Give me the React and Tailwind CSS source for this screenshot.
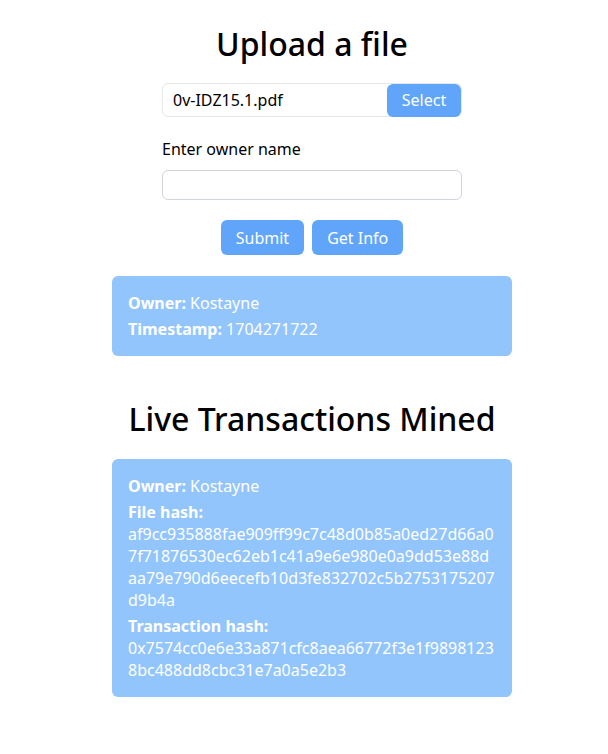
import React, { useState } from "react";

const fileHash =
  "af9cc935888fae909ff99c7c48d0b85a0ed27d66a07f71876530ec62eb1c41a9e6e980e0a9dd53e88daa79e790d6eecefb10d3fe832702c5b2753175207d9b4a";
const txHash = "0x7574cc0e6e33a871cfc8aea66772f3e1f98981238bc488dd8cbc31e7a0a5e2b3";

const App = () => {
  const [owner, setOwner] = useState("");

  return (
    <div className="min-h-screen bg-white pl-4 font-['Noto_Sans',sans-serif] text-base text-black">
      <div className="flex flex-col items-center">
        <h1 className="mt-[22px] text-[32px] leading-[44px] font-medium">Upload a file</h1>

        <div className="mt-[17px] flex h-[34px] w-[300px] items-center rounded-md border border-gray-200 bg-white">
          <span className="flex-1 pl-[10px] leading-[22px]">0v-IDZ15.1.pdf</span>
          <button className="h-[33px] w-[74px] rounded-md bg-[#60a5fa] text-white leading-[22px]">
            Select
          </button>
        </div>

        <div className="mt-[21px] w-[300px]">
          <label className="block leading-[22px]">Enter owner name</label>
          <input
            type="text"
            value={owner}
            onChange={(e) => setOwner(e.target.value)}
            className="mt-[10px] block h-[30px] w-full rounded-md border border-gray-300 px-2 outline-none"
          />
        </div>

        <div className="mt-[20px] flex gap-2">
          <button className="h-[35px] rounded-md bg-[#60a5fa] px-[15px] leading-[22px] text-white">Submit</button>
          <button className="h-[35px] rounded-md bg-[#60a5fa] px-[15px] leading-[22px] text-white">Get Info</button>
        </div>

        <div className="mt-[21px] w-[400px] space-y-1 rounded-md bg-[#93c5fd] p-4 leading-[22px] text-white">
          <p>
            <span className="font-bold">Owner:</span> Kostayne
          </p>
          <p>
            <span className="font-bold">Timestamp:</span> 1704271722
          </p>
        </div>

        <h1 className="mt-[41px] text-[32px] leading-[44px] font-medium">Live Transactions Mined</h1>

        <div className="mt-[18px] mb-10 w-[400px] space-y-1 rounded-md bg-[#93c5fd] p-4 leading-[22px] text-white">
          <p>
            <span className="font-bold">Owner:</span> Kostayne
          </p>
          <div>
            <p className="font-bold">File hash:</p>
            <p className="break-all">{fileHash}</p>
          </div>
          <div>
            <p className="font-bold">Transaction hash:</p>
            <p className="break-all">{txHash}</p>
          </div>
        </div>
      </div>
    </div>
  );
};

export default App;
